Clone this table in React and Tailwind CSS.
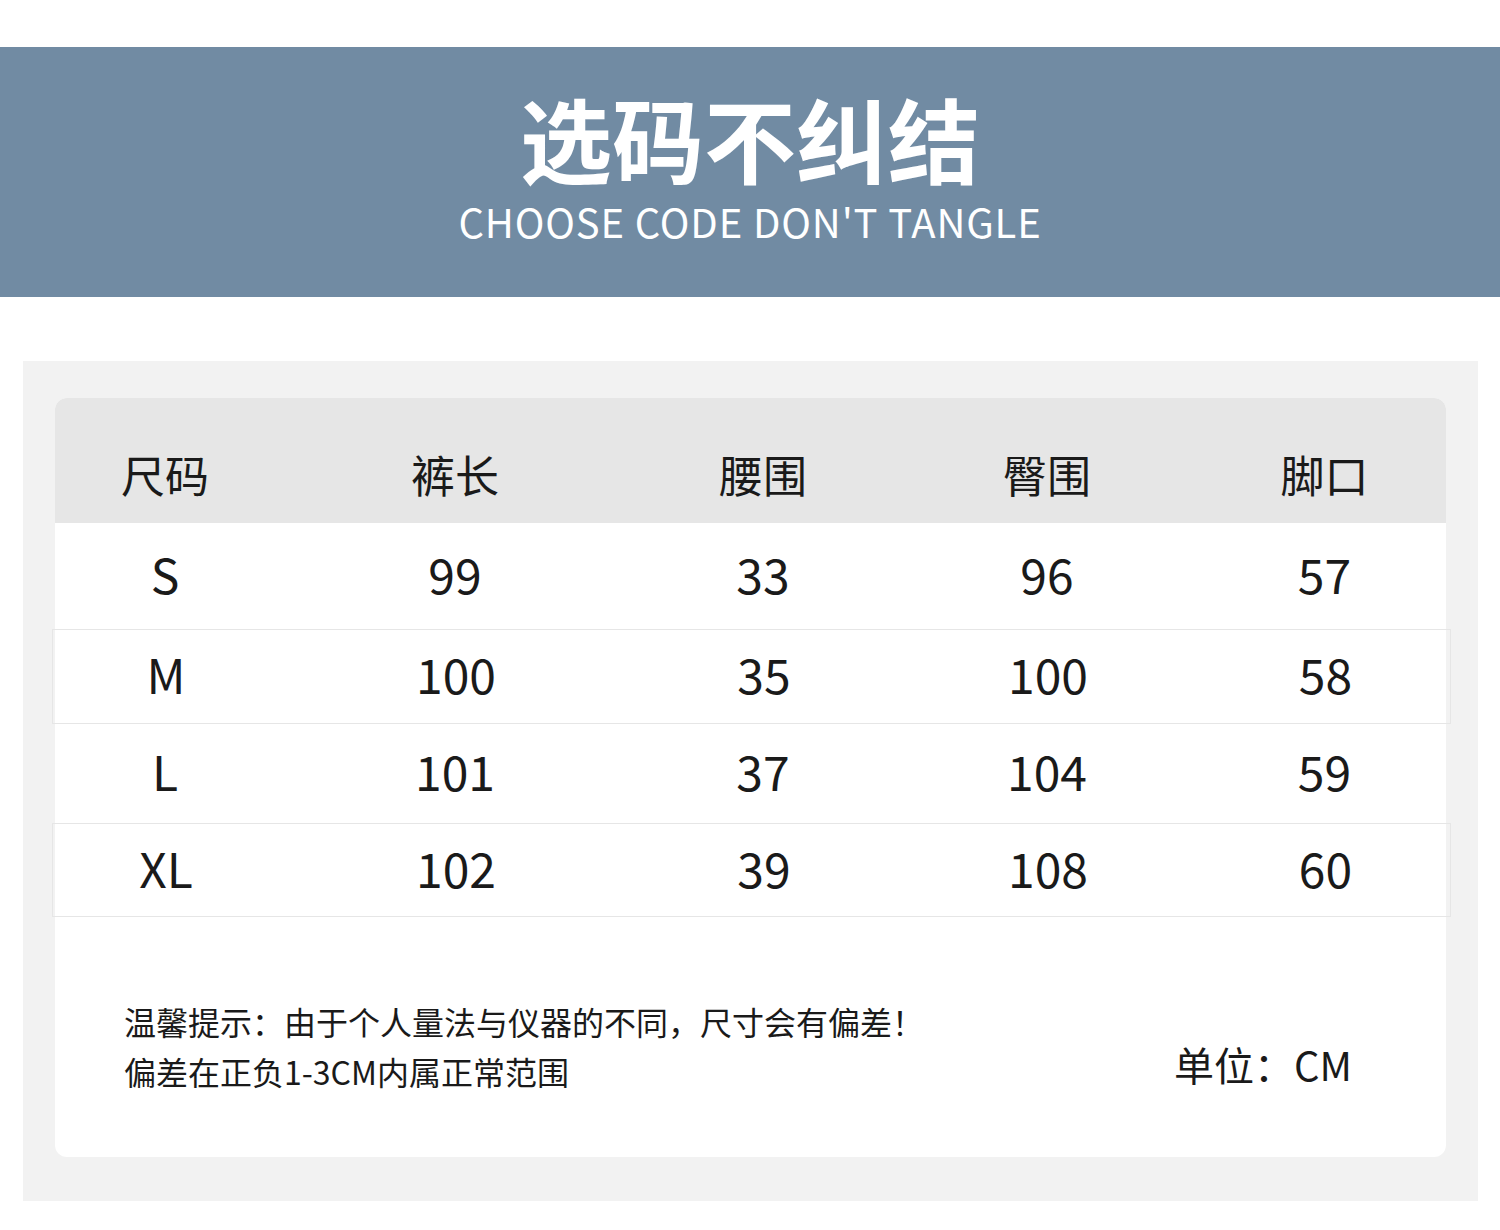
import React from "react";

const rows = [
  ["S", "99", "33", "96", "57"],
  ["M", "100", "35", "100", "58"],
  ["L", "101", "37", "104", "59"],
  ["XL", "102", "39", "108", "60"],
];

const heads = ["尺码", "裤长", "腰围", "臀围", "脚口"];
const cols = "grid grid-cols-[220px_360px_256px_312px_243px]";

export default function App() {
  return (
    <div
      className="w-[1500px] h-[1230px] bg-white text-[#1a1a1a]"
      style={{ fontFamily: '"Noto Sans CJK SC", "Noto Sans", sans-serif' }}
    >
      <div className="h-[47px]" />
      {/* banner */}
      <div className="h-[250px] bg-[#718ba3] flex flex-col items-center text-white">
        <div className="mt-[44px] text-[92px] font-bold leading-none">选码不纠结</div>
        <div className="mt-[18px] text-[40px] leading-none tracking-[0.85px]">CHOOSE CODE DON'T TANGLE</div>
      </div>
      <div className="h-[64px]" />

      {/* panel */}
      <div className="mx-[23px] w-[1455px] h-[840px] bg-[#f2f2f2] pt-[37px] pl-[32px]">
        <div className="w-[1391px] h-[759px] bg-white rounded-[12px] flex flex-col">
          <div className={`${cols} h-[125px] bg-[#e6e6e6] rounded-t-[12px] pt-[26px] items-center text-[44px]`}>
            {heads.map((h) => (
              <div key={h} className="text-center">{h}</div>
            ))}
          </div>
          {rows.map((r, i) => {
            const boxed = i % 2 === 1;
            const h = ["h-[106px]", "h-[95px]", "h-[99px]", "h-[94px]"][i];
            return (
              <div
                key={r[0]}
                className={`${cols} ${h} items-center text-[48px] pb-[7px] ${
                  boxed ? "border border-[#e6e6e6] ml-[-3px] mr-[-5px] pl-[3px]" : ""
                }`}
              >
                {r.map((c, j) => (
                  <div key={j} className="text-center leading-none">{c}</div>
                ))}
              </div>
            );
          })}
          <div className="flex items-start justify-between pl-[69px] pr-[94px] mt-[79px]">
            <div className="text-[32px] leading-[50px]">
              <div>温馨提示：由于个人量法与仪器的不同，尺寸会有偏差！</div>
              <div>偏差在正负1-3CM内属正常范围</div>
            </div>
            <div className="text-[40px] leading-none mt-[48px]">单位：CM</div>
          </div>
        </div>
      </div>
    </div>
  );
}
